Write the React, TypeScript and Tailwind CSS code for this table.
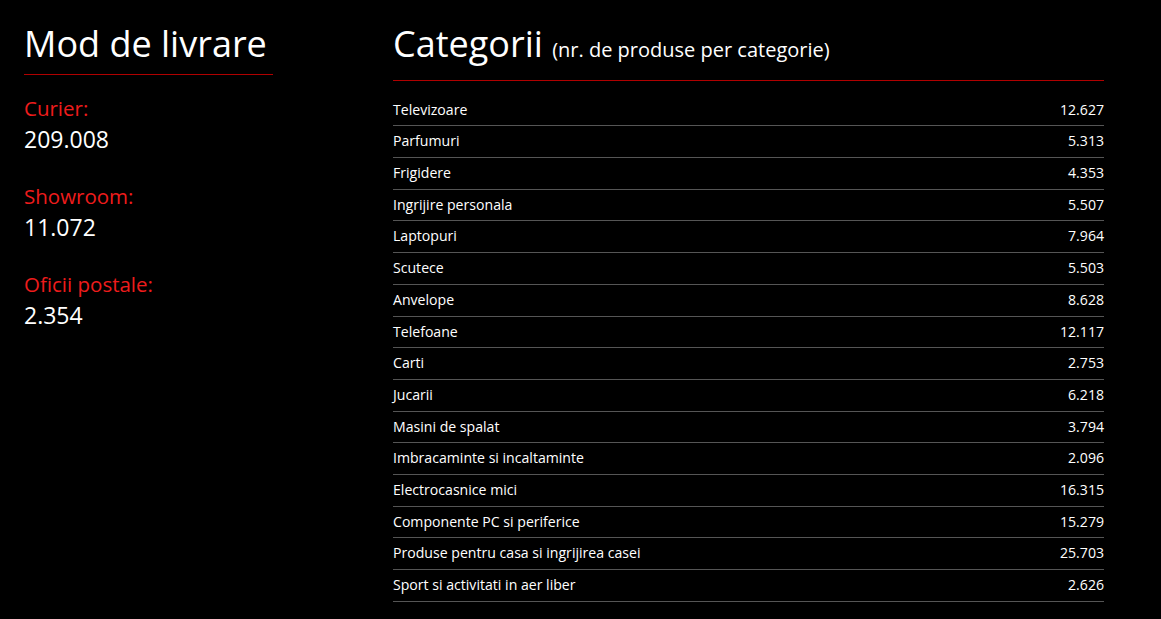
import React from 'react';

const livrare = [
  { label: 'Curier:', value: '209.008' },
  { label: 'Showroom:', value: '11.072' },
  { label: 'Oficii postale:', value: '2.354' },
];

const categorii = [
  ['Televizoare', '12.627'],
  ['Parfumuri', '5.313'],
  ['Frigidere', '4.353'],
  ['Ingrijire personala', '5.507'],
  ['Laptopuri', '7.964'],
  ['Scutece', '5.503'],
  ['Anvelope', '8.628'],
  ['Telefoane', '12.117'],
  ['Carti', '2.753'],
  ['Jucarii', '6.218'],
  ['Masini de spalat', '3.794'],
  ['Imbracaminte si incaltaminte', '2.096'],
  ['Electrocasnice mici', '16.315'],
  ['Componente PC si periferice', '15.279'],
  ['Produse pentru casa si ingrijirea casei', '25.703'],
  ['Sport si activitati in aer liber', '2.626'],
];

export default function App() {
  return (
    <div className="min-h-screen bg-black text-white font-['Open_Sans',sans-serif]">
      <div className="flex pl-[24px] pt-[24px]">
        {/* Mod de livrare */}
        <div className="w-[369px] shrink-0">
          <h2 className="w-[249px] text-[36px] leading-[1.1] font-normal pb-[10px] border-b border-[#b00000] mb-[19px]">
            Mod de livrare
          </h2>
          {livrare.map((item) => (
            <div key={item.label} className="mb-[27px]">
              <div className="text-[20.5px] leading-[28px] text-[#ee1c1c]">{item.label}</div>
              <div className="text-[23px] leading-[32px] mt-[1px]">{item.value}</div>
            </div>
          ))}
        </div>

        {/* Categorii */}
        <div className="w-[711px] shrink-0">
          <h2 className="text-[36px] leading-[1.1] font-normal pb-[16px] border-b border-[#b00000]">
            Categorii <span className="text-[20px]">(nr. de produse per categorie)</span>
          </h2>
          <div className="mt-[14px]">
            {categorii.map(([name, count]) => (
              <div
                key={name}
                className="flex justify-between py-[5px] text-[14.1px] leading-[20.7px] border-b border-[#555555]"
              >
                <span>{name}</span>
                <span>{count}</span>
              </div>
            ))}
          </div>
        </div>
      </div>
    </div>
  );
}
